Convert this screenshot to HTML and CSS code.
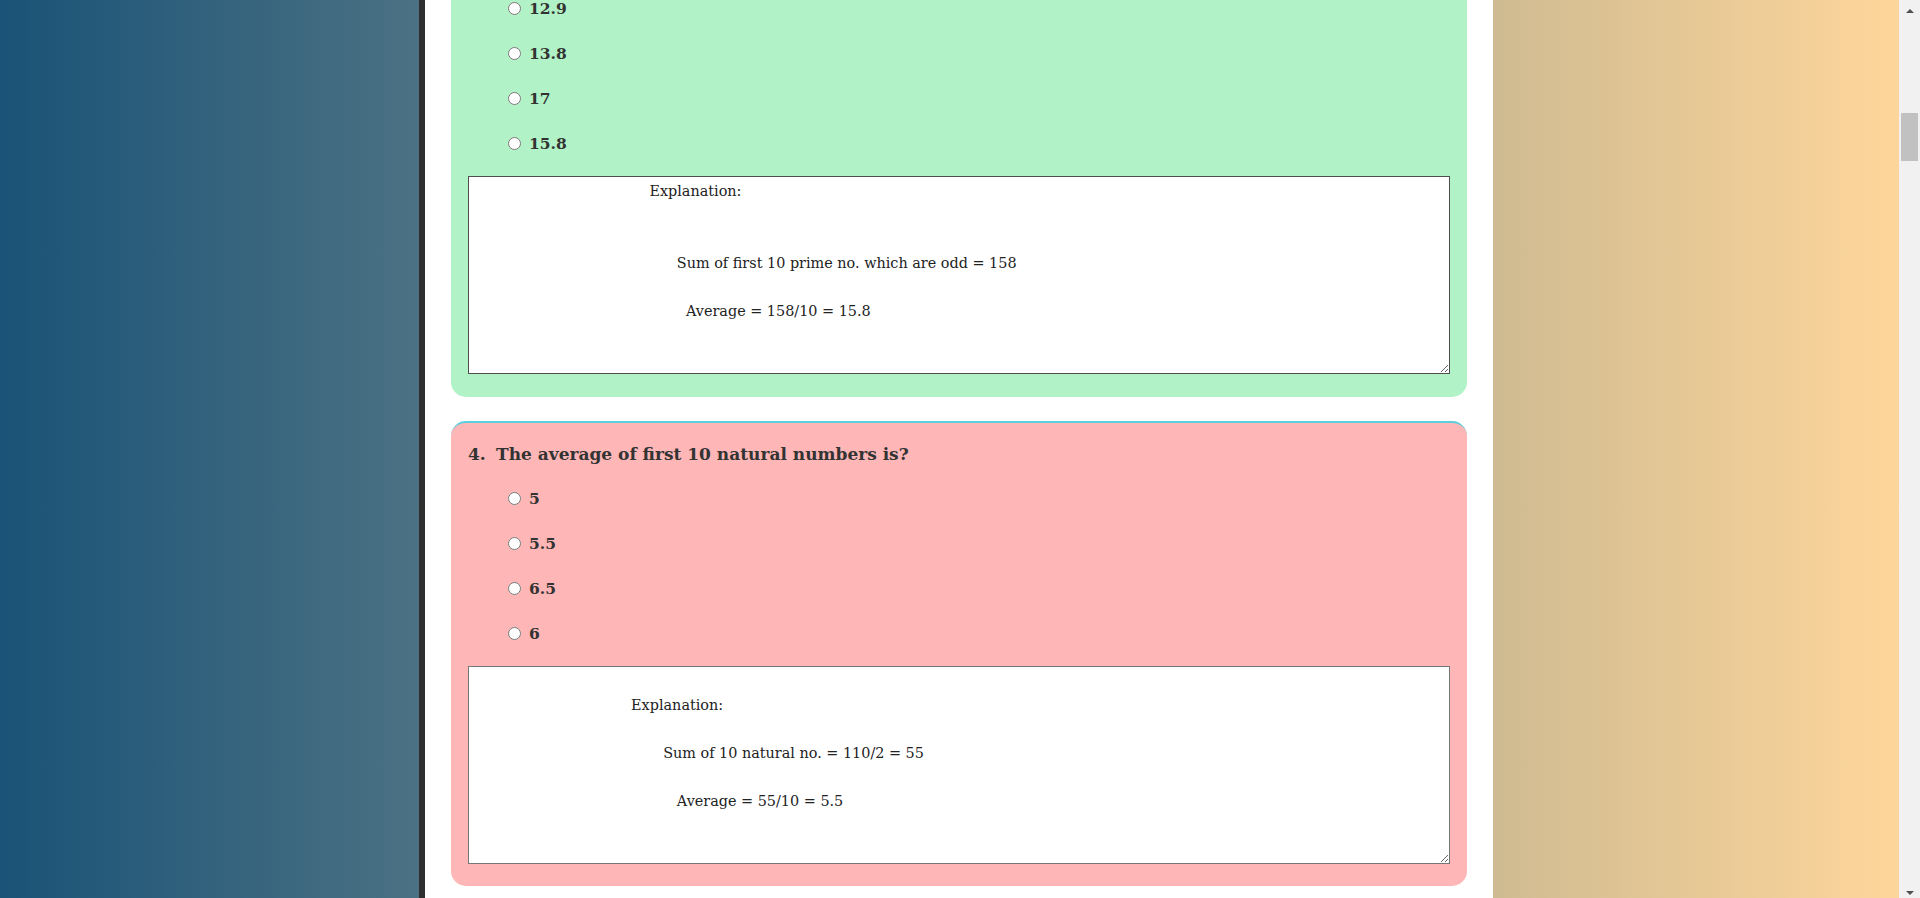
FILE: index.html
```html
<!DOCTYPE html>
<html lang="en">
<head>
<meta charset="utf-8">
<title>Quiz</title>
<link rel="stylesheet" href="styles.css">
</head>
<body>
<div class="page">
  <div class="side side-left"></div>
  <div class="divider"></div>
  <main class="main">
    <div class="scroll">
      <section class="card card-correct card-cut">
        <div class="options">
          <label class="option"><input type="radio" name="q3"><span>12.9</span></label>
          <label class="option"><input type="radio" name="q3"><span>13.8</span></label>
          <label class="option"><input type="radio" name="q3"><span>17</span></label>
          <label class="option"><input type="radio" name="q3"><span>15.8</span></label>
        </div>
        <textarea class="explain explain-dark" readonly>                                       Explanation:


                                             Sum of first 10 prime no. which are odd = 158

                                               Average = 158/10 = 15.8</textarea>
      </section>

      <section class="card card-wrong">
        <h3 class="question"><span class="qnum">4.</span><span>The average of first 10 natural numbers is?</span></h3>
        <div class="options">
          <label class="option"><input type="radio" name="q4"><span>5</span></label>
          <label class="option"><input type="radio" name="q4"><span>5.5</span></label>
          <label class="option"><input type="radio" name="q4"><span>6.5</span></label>
          <label class="option"><input type="radio" name="q4"><span>6</span></label>
        </div>
        <textarea class="explain" readonly>

                                   Explanation:

                                          Sum of 10 natural no. = 110/2 = 55

                                             Average = 55/10 = 5.5</textarea>
      </section>
    </div>
  </main>
  <div class="side side-right"></div>
  <div class="scrollbar">
    <div class="sb-arrow sb-up"></div>
    <div class="sb-track"><div class="sb-thumb"></div></div>
    <div class="sb-arrow sb-down"></div>
  </div>
</div>
</body>
</html>
```
FILE: styles.css
```css
html, body {
  margin: 0;
  padding: 0;
  height: 898px;
  overflow: hidden;
}

body {
  font-family: "DejaVu Serif", "Liberation Serif", serif;
  color: #333;
}

.page {
  display: flex;
  height: 898px;
}

.side-left {
  width: 419px;
  background: linear-gradient(to right, #1a5377, #4b7183);
}

.divider {
  width: 6px;
  background: #2f2f2f;
}

.main {
  width: 1068px;
  background: #fff;
  padding: 0 26px;
  box-sizing: border-box;
  overflow: hidden;
}

.scroll {
  display: flex;
  flex-direction: column;
  gap: 24px;
  margin-top: -14px;
}

.side-right {
  flex: 1;
  background: linear-gradient(to right, #cfbb91, #fed69b);
}

.card {
  border-radius: 15px;
  padding: 8px 17px 22px;
  display: flex;
  flex-direction: column;
}

.card-correct {
  background: #b1f3c6;
}

.card-cut {
  border-top-left-radius: 0;
  border-top-right-radius: 0;
  padding-top: 0;
  padding-bottom: 23px;
}

.card-wrong {
  background: #ffb6b6;
  border-top: 2px solid #5ccfdc;
}

.question {
  margin: 0;
  height: 45px;
  display: flex;
  align-items: center;
  font-size: 17px;
  font-weight: bold;
  color: #333;
}

.qnum {
  width: 28px;
  flex: none;
}

.options {
  display: flex;
  flex-direction: column;
}

.option {
  height: 45px;
  display: flex;
  align-items: center;
  padding-left: 40px;
  font-size: 15.5px;
  font-weight: bold;
  color: #333;
}

.option input {
  margin: 0 8px 0 0;
  width: 13px;
  height: 13px;
}

.explain {
  margin-top: 10px;
  height: 198px;
  box-sizing: border-box;
  width: 100%;
  border: 1px solid #767676;
  padding: 2px;
  font-family: "DejaVu Serif", "Liberation Serif", serif;
  font-size: 14.4px;
  line-height: 24px;
  color: #222;
  background: #fff;
  resize: vertical;
  display: block;
}

.explain-dark {
  border-color: #4f4f4f;
}

.scrollbar {
  width: 21px;
  background: #f1f1f1;
  display: flex;
  flex-direction: column;
  align-items: center;
}

.sb-arrow {
  height: 17px;
  width: 17px;
  display: flex;
  align-items: center;
  justify-content: center;
}

.sb-up::before {
  content: "";
  border-left: 4px solid transparent;
  border-right: 4px solid transparent;
  border-bottom: 4px solid #505050;
  margin-top: 4px;
}

.sb-down::before {
  content: "";
  border-left: 4px solid transparent;
  border-right: 4px solid transparent;
  border-top: 4px solid #505050;
  margin-top: 6px;
}

.sb-track {
  flex: 1;
  width: 100%;
  display: flex;
  flex-direction: column;
  align-items: flex-end;
  padding-top: 96px;
  box-sizing: border-box;
}

.sb-thumb {
  width: 17px;
  height: 48px;
  margin-right: 2px;
  background: #c1c1c1;
}
```
